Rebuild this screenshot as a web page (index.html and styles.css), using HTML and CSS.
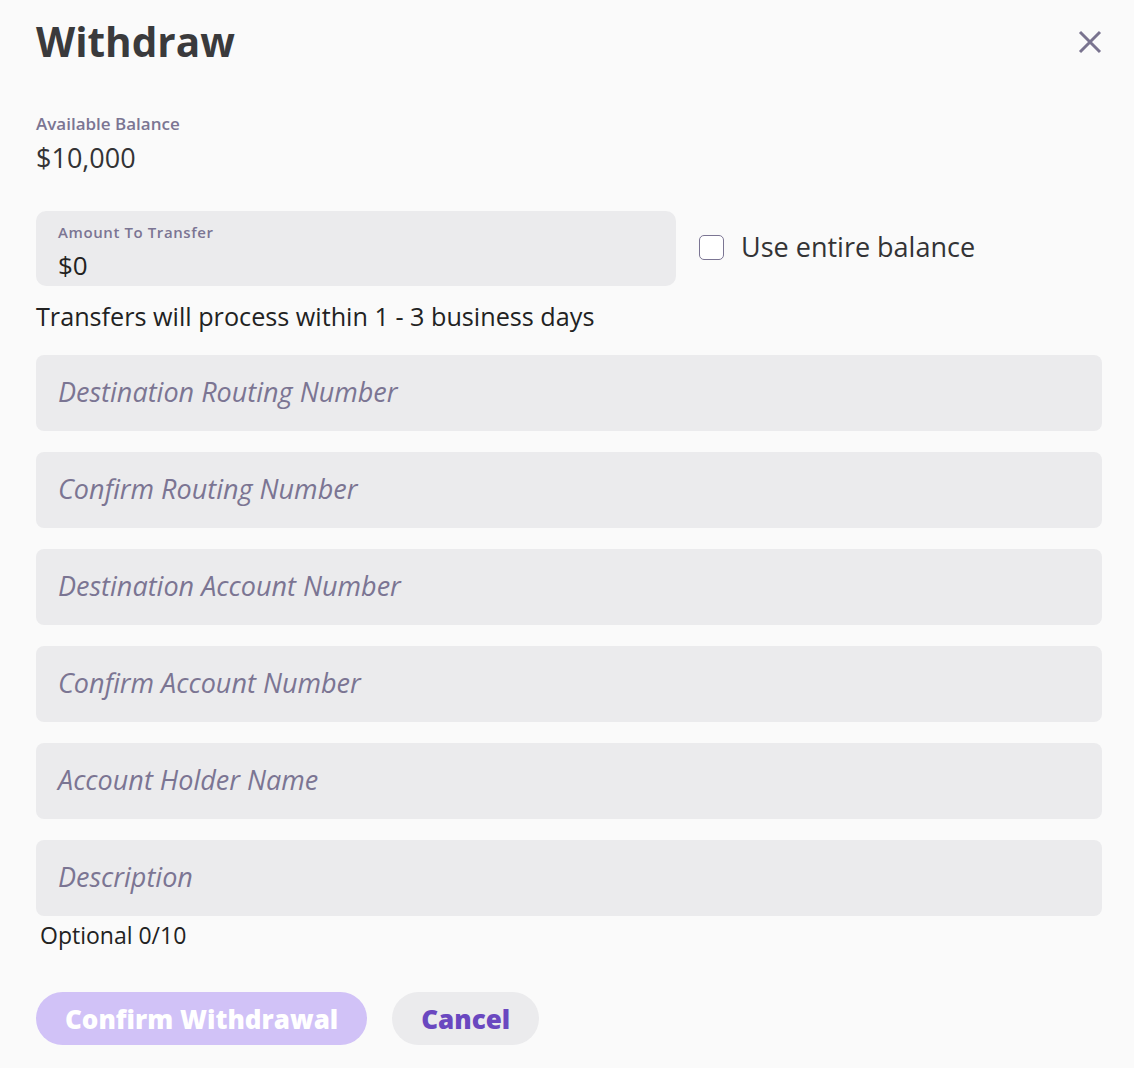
FILE: index.html
```html
<!DOCTYPE html>
<html lang="en">
<head>
<meta charset="utf-8">
<title>Withdraw</title>
<link rel="stylesheet" href="styles.css">
</head>
<body>
<div class="dialog">
  <header class="head">
    <h1 class="title">Withdraw</h1>
    <button class="close" aria-label="Close">
      <svg width="24" height="24" viewBox="0 0 24 24"><path d="M2 2 L22 22 M22 2 L2 22" stroke="#79738f" stroke-width="3" fill="none"/></svg>
    </button>
  </header>

  <section class="balance">
    <div class="label">Available Balance</div>
    <div class="balance-value">$10,000</div>
  </section>

  <div class="amount-row">
    <div class="amount-field">
      <div class="field-label">Amount To Transfer</div>
      <div class="amount-value">$0</div>
    </div>
    <label class="check">
      <span class="box"></span>
      <span class="check-text">Use entire balance</span>
    </label>
  </div>

  <p class="note">Transfers will process within 1 - 3 business days</p>

  <div class="fields">
    <div class="input">Destination Routing Number</div>
    <div class="input">Confirm Routing Number</div>
    <div class="input">Destination Account Number</div>
    <div class="input">Confirm Account Number</div>
    <div class="input">Account Holder Name</div>
    <div class="input">Description</div>
  </div>
  <div class="hint">Optional 0/10</div>

  <div class="actions">
    <button class="btn btn-primary">Confirm Withdrawal</button>
    <button class="btn btn-secondary">Cancel</button>
  </div>
</div>
</body>
</html>
```

FILE: styles.css
```css
* { box-sizing: border-box; }
html, body { margin: 0; padding: 0; }
body {
  background: #fafafa;
  font-family: "Open Sans", "Noto Sans", sans-serif;
  color: #333335;
}
.dialog {
  padding: 14px 32px 0 36px;
}
.head {
  display: flex;
  justify-content: space-between;
  align-items: center;
  height: 56px;
}
.title {
  margin: 0;
  font-size: 40.5px;
  line-height: 56px;
  font-weight: 700;
  color: #3a3a3c;
}
.close {
  border: 0;
  background: transparent;
  padding: 0;
  margin-right: 0;
  width: 24px;
  height: 24px;
  display: flex;
}
.balance {
  margin-top: 44px;
}
.label {
  font-size: 17px;
  line-height: 20px;
  font-weight: 600;
  color: #7b7593;
}
.balance-value {
  margin-top: 8px;
  font-size: 27px;
  line-height: 32px;
  color: #333335;
}
.amount-row {
  margin-top: 37px;
  display: flex;
  align-items: center;
  gap: 23px;
}
.amount-field {
  width: 640px;
  height: 75px;
  background: #ebebed;
  border-radius: 10px;
  padding: 12px 22px 0;
}
.field-label {
  font-size: 15px;
  line-height: 18px;
  font-weight: 600;
  letter-spacing: 0.6px;
  color: #7b7593;
}
.amount-value {
  margin-top: 8px;
  font-size: 26px;
  line-height: 32px;
  color: #222;
}
.check {
  display: flex;
  align-items: center;
  gap: 17px;
  margin-top: -3px;
}
.box {
  width: 25px;
  height: 25px;
  border: 1.5px solid #7b7593;
  border-radius: 5px;
  background: #fff;
}
.check-text {
  font-size: 27px;
  line-height: 34px;
  color: #333335;
}
.note {
  margin: 14px 0 0;
  font-size: 25.2px;
  line-height: 32px;
  color: #222;
}
.fields {
  margin-top: 23px;
  display: flex;
  flex-direction: column;
  gap: 21px;
}
.input {
  height: 76px;
  background: #ebebed;
  border-radius: 8px;
  padding: 0 22px 4px;
  display: flex;
  align-items: center;
  font-size: 27px;
  font-style: italic;
  color: #7b7593;
}
.hint {
  margin-top: 4px;
  padding-left: 4px;
  font-size: 23px;
  line-height: 30px;
  color: #222;
}
.actions {
  margin-top: 42px;
  display: flex;
  gap: 25px;
}
.btn {
  height: 53px;
  border: 0;
  border-radius: 27px;
  padding: 0 29px;
  font-family: "Open Sans", "Noto Sans", sans-serif;
  font-size: 26px;
  font-weight: 800;
}
.btn-primary {
  background: #d1c2f7;
  color: #fff;
}
.btn-secondary {
  background: #ebebed;
  color: #6a48c0;
}
```
